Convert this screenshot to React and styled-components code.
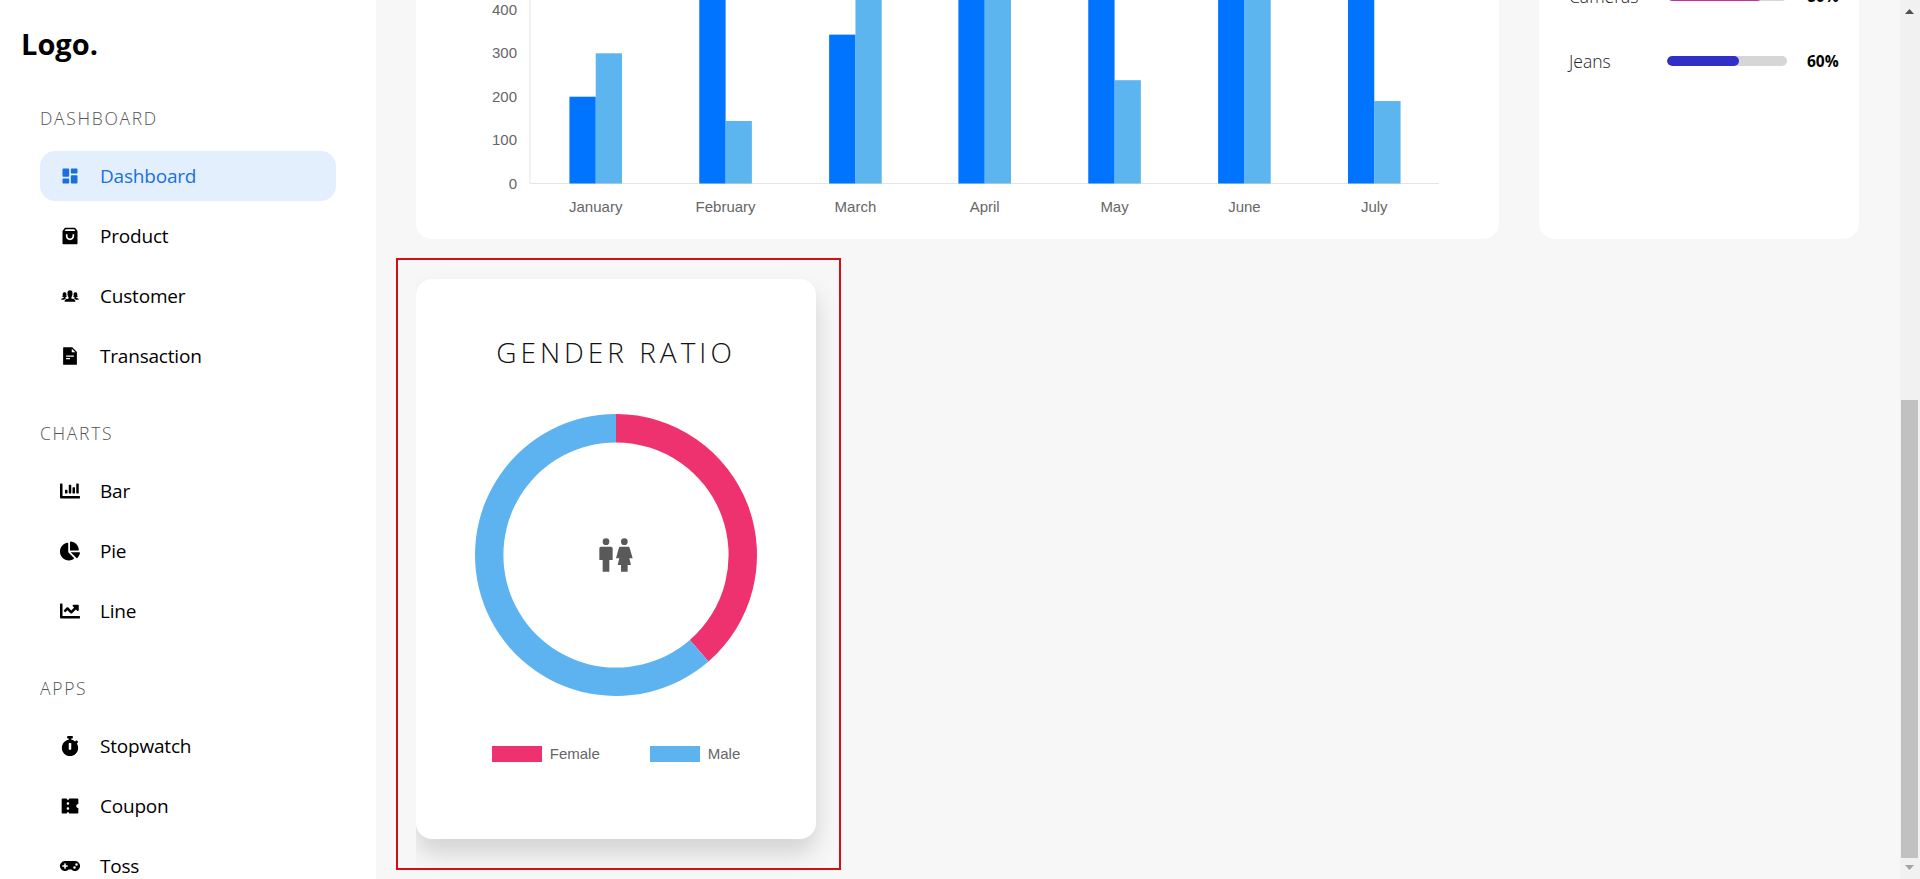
import React, { useLayoutEffect, useRef } from 'react'
import styled, { createGlobalStyle } from 'styled-components'
import { RiDashboardFill, RiShoppingBag3Fill, RiCoupon3Fill } from 'react-icons/ri'
import { IoIosPeople } from 'react-icons/io'
import { AiFillFileText } from 'react-icons/ai'
import { FaChartBar, FaChartPie, FaChartLine, FaStopwatch, FaGamepad } from 'react-icons/fa'
import { BiMaleFemale } from 'react-icons/bi'

const GlobalStyle = createGlobalStyle`
  * { box-sizing: border-box; }
  html, body { margin: 0; height: 100%; overflow: hidden; }
  body { font-family: "Open Sans", "Noto Sans", sans-serif; color: #000; }
`

const menus = [
  {
    title: 'DASHBOARD',
    items: [
      { label: 'Dashboard', icon: RiDashboardFill, active: true },
      { label: 'Product', icon: RiShoppingBag3Fill },
      { label: 'Customer', icon: IoIosPeople },
      { label: 'Transaction', icon: AiFillFileText },
    ],
  },
  {
    title: 'CHARTS',
    items: [
      { label: 'Bar', icon: FaChartBar },
      { label: 'Pie', icon: FaChartPie },
      { label: 'Line', icon: FaChartLine },
    ],
  },
  {
    title: 'APPS',
    items: [
      { label: 'Stopwatch', icon: FaStopwatch },
      { label: 'Coupon', icon: RiCoupon3Fill },
      { label: 'Toss', icon: FaGamepad },
    ],
  },
]

const months = [
  { name: 'January', a: 200, b: 300 },
  { name: 'February', a: 444, b: 144 },
  { name: 'March', a: 343, b: 495 },
  { name: 'April', a: 690, b: 590 },
  { name: 'May', a: 720, b: 238 },
  { name: 'June', a: 560, b: 640 },
  { name: 'July', a: 780, b: 190 },
]

const CHART_W = 1083
const CHART_H = 500
const AXIS_X = 114
const AXIS_END = 1023
const BASE_Y = 444.5
const PER_100 = 43.4
const BAR_W = 26.3
const CHART_FONT = "'Liberation Sans', Arial, sans-serif"

function SalesChart() {
  const step = (AXIS_END - AXIS_X) / months.length
  const scale = (v) => (v / 100) * PER_100
  return (
    <svg width={CHART_W} height={CHART_H} viewBox={`0 0 ${CHART_W} ${CHART_H}`}>
      <line x1={AXIS_X} x2={AXIS_X} y1="20" y2={BASE_Y} stroke="#e5e5e5" />
      <line x1={AXIS_X} x2={AXIS_END} y1={BASE_Y} y2={BASE_Y} stroke="#e5e5e5" />
      {[0, 100, 200, 300, 400].map((t) => (
        <text key={t} x="101" y={BASE_Y - scale(t) + 5} textAnchor="end" fontSize="15" fill="#666" fontFamily={CHART_FONT}>
          {t}
        </text>
      ))}
      {months.map((m, i) => {
        const cx = AXIS_X + step * (i + 0.5) + (i < 3 ? 0.8 : 0.2)
        return (
          <g key={m.name}>
            <rect x={cx - BAR_W} y={BASE_Y - scale(m.a)} width={BAR_W} height={scale(m.a)} fill="rgb(0,115,255)" />
            <rect x={cx} y={BASE_Y - scale(m.b)} width={BAR_W} height={scale(m.b)} fill="rgba(53,162,235,.8)" />
            <text x={cx} y={BASE_Y + 28} textAnchor="middle" fontSize="15" fill="#666" fontFamily={CHART_FONT}>
              {m.name}
            </text>
          </g>
        )
      })}
    </svg>
  )
}

function arcPath(cx, cy, r1, r2, from, to) {
  const p = (r, a) => {
    const rad = (a - 90) * (Math.PI / 180)
    return `${cx + r * Math.cos(rad)} ${cy + r * Math.sin(rad)}`
  }
  const large = to - from > 180 ? 1 : 0
  return `M${p(r2, from)} A${r2} ${r2} 0 ${large} 1 ${p(r2, to)} L${p(r1, to)} A${r1} ${r1} 0 ${large} 0 ${p(r1, from)} Z`
}

function Donut() {
  const split = 139
  return (
    <DonutBox>
      <svg width="284" height="284" viewBox="0 0 284 284">
        <path d={arcPath(142, 142, 112.6, 141, 0, split)} fill="#ee3270" />
        <path d={arcPath(142, 142, 112.6, 141, split, 360)} fill="#5cb3f0" />
      </svg>
      <DonutIcon>
        <BiMaleFemale />
      </DonutIcon>
    </DonutBox>
  )
}

export default function App() {
  const mainRef = useRef(null)

  // the reference is taken scrolled right down to the bottom of the page
  useLayoutEffect(() => {
    if (mainRef.current) mainRef.current.scrollTop = mainRef.current.scrollHeight
  }, [])

  return (
    <Shell>
      <GlobalStyle />
      <Sidebar>
        <Logo>Logo.</Logo>
        {menus.map((group) => (
          <Group key={group.title}>
            <GroupTitle>{group.title}</GroupTitle>
            <MenuList>
              {group.items.map(({ label, icon: Icon, active }) => (
                <MenuItem key={label} $active={active}>
                  <MenuIcon><Icon /></MenuIcon>
                  {label}
                </MenuItem>
              ))}
            </MenuList>
          </Group>
        ))}
      </Sidebar>
      <Main ref={mainRef}>
        <ChartRow>
          <Card>
            <SalesChart />
          </Card>
          <Inventory>
            <StockRow>
              <StockLabel>Cameras</StockLabel>
              <StockTrack><StockFill $color="#c22fa8" style={{ width: '79%' }} /></StockTrack>
              <StockValue>80%</StockValue>
            </StockRow>
            <StockRow>
              <StockLabel>Jeans</StockLabel>
              <StockTrack><StockFill $color="#3030c8" style={{ width: '60%' }} /></StockTrack>
              <StockValue>60%</StockValue>
            </StockRow>
          </Inventory>
        </ChartRow>
        <Marked>
          <GenderCard>
            <GenderTitle>GENDER RATIO</GenderTitle>
            <Donut />
            <Legend>
              <LegendItem><Swatch $color="#ee3270" />Female</LegendItem>
              <LegendItem><Swatch $color="#5cb3f0" />Male</LegendItem>
            </Legend>
          </GenderCard>
        </Marked>
      </Main>
      <ScrollRail>
        <RailButton>
          <svg width="20" height="20" viewBox="0 0 20 20"><path d="M5 14h9L9.5 9z" fill="#505050" /></svg>
        </RailButton>
        <RailTrack>
          <RailThumb />
        </RailTrack>
        <RailButton>
          <svg width="20" height="20" viewBox="0 0 20 20"><path d="M5 6h9l-4.5 5z" fill="#a3a3a3" /></svg>
        </RailButton>
      </ScrollRail>
    </Shell>
  )
}

const Shell = styled.div`
  display: flex;
  height: 100vh;
  overflow: hidden;
  background: #f7f7f7;
`

const Sidebar = styled.aside`
  flex: 0 0 376px;
  height: 100%;
  overflow: hidden;
  background: #fff;
  padding: 21px 40px 0;
`

const Logo = styled.h2`
  margin: 0 0 0 -19px;
  font-size: 29px;
  line-height: 46px;
  font-weight: 700;
`

const Group = styled.div`
  margin-top: 40px;
  &:first-of-type { margin-top: 39px; }
`

const GroupTitle = styled.h5`
  margin: 0;
  font-size: 17.5px;
  line-height: 24px;
  font-weight: 300;
  letter-spacing: 1.7px;
  color: #555;
`

const MenuList = styled.ul`
  list-style: none;
  margin: 21px 0 0;
  padding: 0;
  display: flex;
  flex-direction: column;
  gap: 10px;
`

const MenuItem = styled.li`
  height: 50px;
  display: flex;
  align-items: center;
  padding-left: 20px;
  border-radius: 15px;
  font-size: 19px;
  letter-spacing: -0.2px;
  color: ${(p) => (p.$active ? '#1a6fe0' : '#000')};
  background: ${(p) => (p.$active ? '#e3effd' : 'transparent')};
`

const MenuIcon = styled.span`
  width: 40px;
  flex: none;
  display: flex;
  font-size: 20px;
`

const Main = styled.main`
  flex: 1;
  min-width: 0;
  height: 100%;
  overflow-y: hidden;
  padding: 470px 40px 9px;
`

const ChartRow = styled.section`
  display: grid;
  grid-template-columns: 1083px 320px;
  gap: 40px;
  height: 500px;
`

const Card = styled.div`
  background: #fff;
  border-radius: 16px;
  overflow: hidden;
  svg { display: block; }
`

const Inventory = styled(Card)`
  padding: 244px 20px 0 30px;
  display: flex;
  flex-direction: column;
  gap: 40px;
`

const StockRow = styled.div`
  height: 25px;
  display: grid;
  grid-template-columns: 98px 120px auto;
  align-items: center;
`

const StockLabel = styled.span`
  font-size: 17.5px;
  font-weight: 300;
  color: #222;
`

const StockTrack = styled.div`
  height: 10px;
  border-radius: 5px;
  background: #d6d6d6;
  overflow: hidden;
`

const StockFill = styled.div`
  height: 100%;
  border-radius: 5px;
  background: ${(p) => p.$color};
`

const StockValue = styled.span`
  margin-left: 20px;
  font-size: 15.5px;
  font-weight: 700;
`

const Marked = styled.div`
  width: fit-content;
  margin: 19px 0 0 -20px;
  padding: 19px 23px 29px 18px;
  border: 2px solid #d40f14;
`

const GenderCard = styled.div`
  width: 400px;
  height: 560px;
  background: #fff;
  border-radius: 16px;
  box-shadow: 0 14px 24px rgba(0, 0, 0, 0.15);
  clip-path: inset(-40px -40px -40px 0);
  display: flex;
  flex-direction: column;
  align-items: center;
`

const GenderTitle = styled.h2`
  margin: 54px 0 0;
  font-size: 28px;
  line-height: 38px;
  font-weight: 300;
  letter-spacing: 4px;
  color: #111;
`

const DonutBox = styled.div`
  position: relative;
  width: 284px;
  height: 284px;
  margin-top: 42px;
  svg { display: block; }
`

const DonutIcon = styled.span`
  position: absolute;
  inset: 0;
  display: flex;
  align-items: center;
  justify-content: center;
  color: rgba(0, 0, 0, 0.65);
  svg { width: 40px; height: 40px; }
`

const Legend = styled.div`
  display: flex;
  gap: 50px;
  margin-top: 49px;
`

const LegendItem = styled.div`
  display: flex;
  align-items: center;
  gap: 8px;
  font-family: "Liberation Sans", Arial, sans-serif;
  font-size: 15px;
  line-height: 16px;
  color: #666;
`

const Swatch = styled.span`
  width: 50px;
  height: 16px;
  background: ${(p) => p.$color};
`

const ScrollRail = styled.div`
  flex: 0 0 20px;
  height: 100%;
  display: flex;
  flex-direction: column;
  background: #f1f1f1;
`

const RailButton = styled.div`
  height: 20px;
  flex: none;
  svg { display: block; }
`

const RailTrack = styled.div`
  flex: 1;
  display: flex;
  flex-direction: column;
  justify-content: flex-end;
  padding: 0 2px 1px 1px;
`

const RailThumb = styled.div`
  height: 458px;
  background: #c1c1c1;
`
